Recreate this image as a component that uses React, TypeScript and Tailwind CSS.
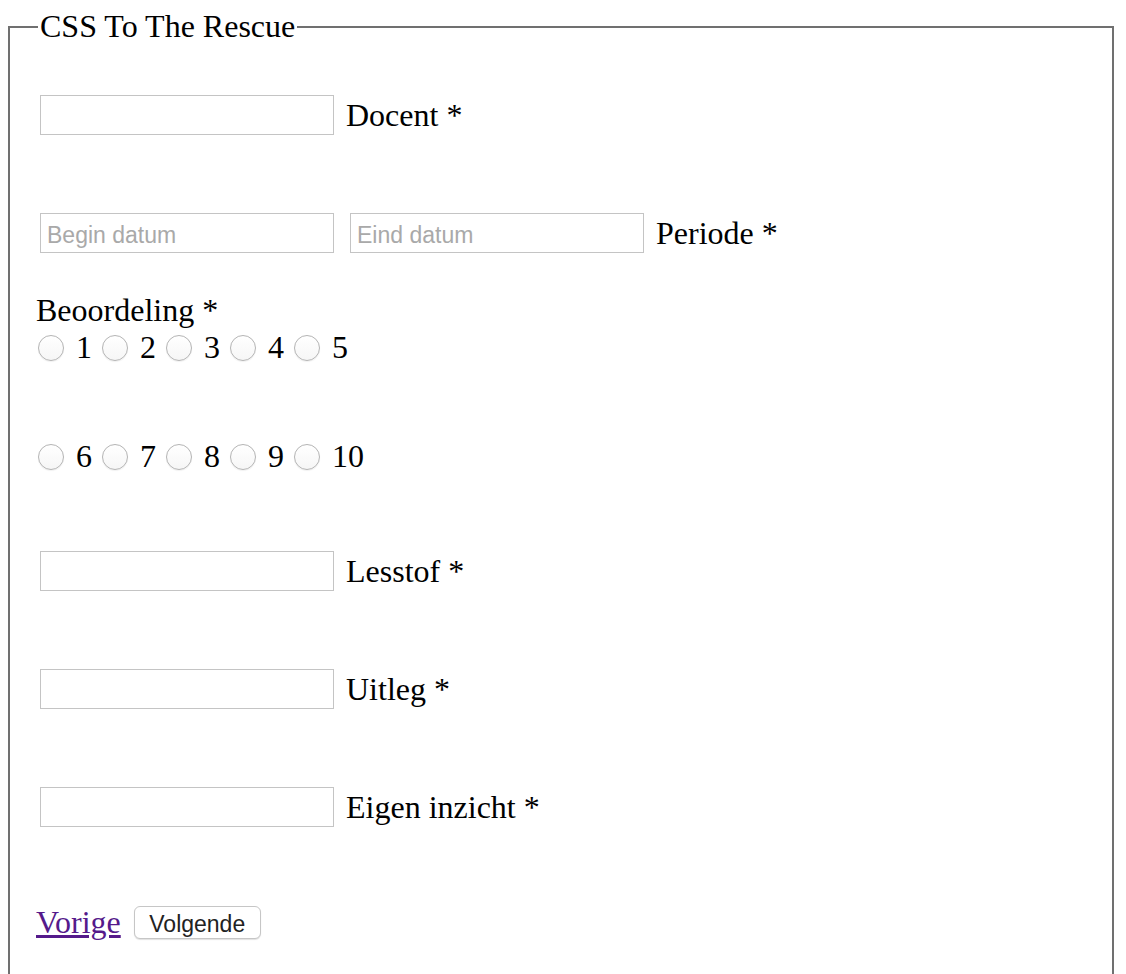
import React from 'react';

const row1 = [1, 2, 3, 4, 5];
const row2 = [6, 7, 8, 9, 10];

function TextField({ placeholder = '', className = '' }: { placeholder?: string; className?: string }) {
  return (
    <input
      type="text"
      placeholder={placeholder}
      className={`w-[294px] h-[40px] border border-[#c4c4c4] bg-white pl-[6px] pr-[6px] pt-[5px] font-['Liberation_Sans',sans-serif] text-[23px] text-black placeholder:text-[#a9a9a9] outline-none ${className}`}
    />
  );
}

function RadioRow({ values, className = '' }: { values: number[]; className?: string }) {
  return (
    <div className={`flex items-center h-[37px] ml-[2px] gap-[10px] ${className}`}>
      {values.map((v) => (
        <label key={v} className="flex items-center">
          <input
            type="radio"
            name="beoordeling"
            value={v}
            className="appearance-none w-[26px] h-[26px] mr-[12px] rounded-full border border-[#b4b4b4] bg-linear-to-b from-white to-[#f6f6f6] shadow-[0_1px_1px_rgba(0,0,0,0.06)]"
          />
          <span>{v}</span>
        </label>
      ))}
    </div>
  );
}

export default function App() {
  return (
    <div className="min-h-screen bg-white pt-2 pl-2 font-['Liberation_Serif',serif] text-[32px] leading-[37px] text-black">
      <fieldset className="w-[1106px] border-2 border-solid border-[#707070] px-[26px] pb-[60px]">
        <legend className="ml-[2px] px-[2px]">CSS To The Rescue</legend>

        {/* docent */}
        <div className="flex items-center h-[40px] mt-[50px]">
          <TextField className="ml-1" />
          <span className="ml-3">Docent *</span>
        </div>

        {/* periode */}
        <div className="flex items-center h-[40px] mt-[78px]">
          <TextField className="ml-1" placeholder="Begin datum" />
          <TextField className="ml-4" placeholder="Eind datum" />
          <span className="ml-3">Periode *</span>
        </div>

        {/* beoordeling */}
        <div className="mt-[39px]">Beoordeling *</div>
        <RadioRow values={row1} />
        <RadioRow values={row2} className="mt-[72px]" />

        <div className="flex items-center h-[40px] mt-[76px]">
          <TextField className="ml-1" />
          <span className="ml-3">Lesstof *</span>
        </div>
        <div className="flex items-center h-[40px] mt-[78px]">
          <TextField className="ml-1" />
          <span className="ml-3">Uitleg *</span>
        </div>
        <div className="flex items-center h-[40px] mt-[78px]">
          <TextField className="ml-1" />
          <span className="ml-3">Eigen inzicht *</span>
        </div>

        <div className="flex items-center h-[37px] mt-[77px]">
          <a href="#" className="text-[#551a8b] underline">Vorige</a>
          <button
            type="button"
            className="ml-[13px] w-[127px] h-[33px] pt-[3px] rounded-[6px] border border-[#c6c6c6] bg-white font-['Liberation_Sans',sans-serif] text-[23px] leading-none text-[#222] shadow-[0_1px_1px_rgba(0,0,0,0.12)]"
          >
            Volgende
          </button>
        </div>
      </fieldset>
    </div>
  );
}
